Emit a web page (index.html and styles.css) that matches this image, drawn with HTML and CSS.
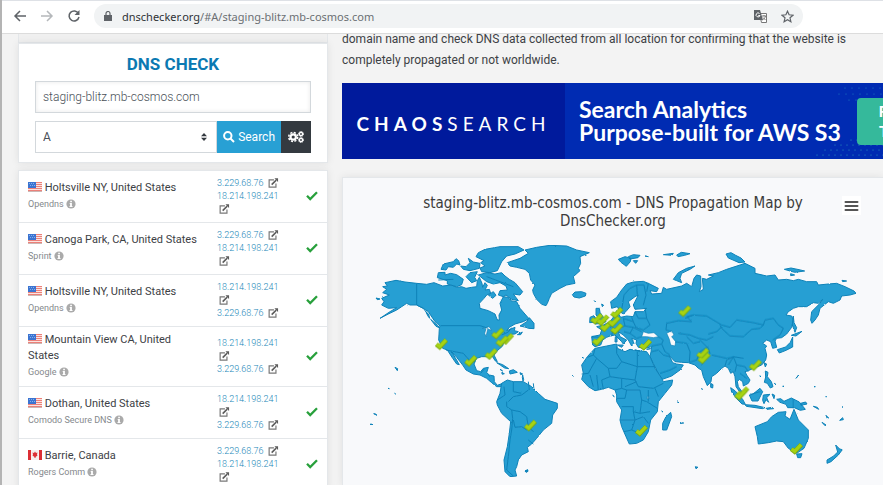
FILE: index.html
```html
<!DOCTYPE html>
<html lang="en">
<head>
<meta charset="utf-8">
<title>DNS Checker</title>
<link rel="stylesheet" href="styles.css">
</head>
<body>
<svg class="defs" aria-hidden="true">
  <symbol id="flag-us" viewBox="0 0 14 10"><path fill="#fbe3df" d="M0 0h14v10H0z"/><path stroke="#ec8079" d="M0 .5h14M0 2.5h14M0 4.5h14M0 6.5h14M0 8.5h14"/><path fill="#3b74d1" d="M0 0h8v6H0z"/><path stroke="#84aeea" stroke-dasharray="1 1" d="M1 1.5h6M2 3.5h6"/><path fill="none" stroke="#00000030" d="M0 9.5h14"/></symbol>
  <symbol id="flag-ca" viewBox="0 0 14 10"><path fill="#f7eeee" d="M0 0h14v10H0z"/><path fill="#dc2f35" d="M0 0h3v10H0zM11 0h3v10h-3zM7 1.500l1 1.500 1.500-.5-.5 2 .5 1L7.500 7v1h-1V7L4.500 5.500l.5-1-.5-2L6 3z"/></symbol>
  <symbol id="info" viewBox="0 0 10 10"><circle cx="5" cy="5" r="4.600" fill="#aaa"/><path fill="#fff" d="M4.200 1.800h1.700v1.500H4.200zM3.700 4h2.200v3h.6v1h-3V7h.6V5h-.4z"/></symbol>
  <symbol id="ext" viewBox="0 0 12 11"><path fill="none" stroke="#787878" stroke-width="1.300" d="M6.500 2H1.200v8h7.500V6"/><path stroke="#5c5c5c" stroke-width="1.700" d="M4 7.300l5-5"/><path fill="#5c5c5c" d="M7 .3h4v4z"/></symbol>
  <symbol id="ok" viewBox="0 0 12 10"><path fill="none" stroke="#28a03c" stroke-width="2.300" d="M1 4.800l3.200 3.200L11 1.200"/></symbol>
  <symbol id="pin" viewBox="-22 -20 44 40"><path fill="none" stroke="#7da90f" stroke-width="14" d="M-15 1L-5 9 15-12"/><path fill="none" stroke="#a6d313" stroke-width="10" d="M-14 1L-5 8 14-12"/></symbol>
</svg>

<header class="toolbar">
  <button class="nav" aria-label="Back"><svg viewBox="0 0 14 14"><path d="M13 7H2M7 2L2 7l5 5"/></svg></button>
  <button class="nav nav-off" aria-label="Forward"><svg viewBox="0 0 14 14"><path d="M1 7h11M7 2l5 5-5 5"/></svg></button>
  <button class="nav" aria-label="Reload"><svg viewBox="0 0 14 14"><path d="M11.500 4.500A5 5 0 1 0 12 8"/><path class="solid" d="M12.500 1v5h-5z"/></svg></button>
  <div class="address">
    <svg class="lock" viewBox="0 0 8 10"><path fill="#5f6368" d="M0 4h8v6H0z"/><path fill="none" stroke="#5f6368" stroke-width="1.200" d="M2 4V2.500a2 2 0 0 1 4 0V4"/></svg>
    <span class="url"><b>dnschecker.org</b>/#A/staging-blitz.mb-cosmos.com</span>
    <button class="tool" aria-label="Translate"><svg viewBox="0 0 13 13"><path fill="#fff" stroke="#777" d="M5.500 3.500h7v9h-5z"/><path fill="#5f6368" d="M0 0h6l3 10H0z"/><path fill="none" stroke="#fff" d="M5.500 3.500A2 2 0 1 0 6 5.500H4.300"/><path fill="none" stroke="#777" d="M8 6h4M10 5v1M11.500 6c-.5 2-1.500 3-3 4M9 7.500l2.500 2.500"/></svg></button>
    <button class="tool" aria-label="Bookmark"><svg viewBox="0 0 13 13"><path fill="none" stroke="#5f6368" stroke-width="1.200" d="M6.500 1.200l1.600 3.600 3.900.4-3 2.600.9 3.900-3.400-2-3.400 2 .9-3.900-3-2.600 3.900-.4z"/></svg></button>
  </div>
</header>

<main class="page">
  <aside class="side">
    <div class="card-end"></div>
    <form class="card search">
      <h1>DNS CHECK</h1>
      <input class="field" type="text" aria-label="Domain name" value="staging-blitz.mb-cosmos.com">
      <div class="controls">
        <span class="picker"><select aria-label="Record type"><option>A</option></select><svg viewBox="0 0 6 8"><path fill="#343a40" d="M0 3.300L3 0l3 3.300zM0 4.700h6L3 8z"/></svg></span>
        <button class="go" type="button"><svg viewBox="0 0 12 12"><circle cx="4.800" cy="4.800" r="3.700"/><path d="M7.500 7.500L11 11"/></svg>Search</button>
        <button class="gear" type="button" aria-label="Settings"><svg viewBox="0 0 16 12"><g fill="none" stroke="#fff"><circle cx="5.200" cy="6" r="2.700" stroke-width="2.200"/><circle cx="5.200" cy="6" r="4.500" stroke-width="1.500" stroke-dasharray="2.100 1.434"/><circle cx="13" cy="3" r="1.600" stroke-width="1.400"/><circle cx="13" cy="3" r="2.500" stroke-dasharray="1.200 .764"/><circle cx="13" cy="9" r="1.600" stroke-width="1.400"/><circle cx="13" cy="9" r="2.500" stroke-dasharray="1.200 .764"/></g></svg></button>
      </div>
    </form>
    <table class="card results">
      <tr><td class="place"><svg class="flag"><use href="#flag-us"/></svg> Holtsville NY, United States<small>Opendns <svg class="info"><use href="#info"/></svg></small></td><td class="ips"><a href="#">3.229.68.76</a> <svg><use href="#ext"/></svg> <a href="#">18.214.198.241</a> <svg><use href="#ext"/></svg></td><td class="state"><svg><use href="#ok"/></svg></td></tr>
      <tr><td class="place"><svg class="flag"><use href="#flag-us"/></svg> Canoga Park, CA, United States<small>Sprint <svg class="info"><use href="#info"/></svg></small></td><td class="ips"><a href="#">3.229.68.76</a> <svg><use href="#ext"/></svg> <a href="#">18.214.198.241</a> <svg><use href="#ext"/></svg></td><td class="state"><svg><use href="#ok"/></svg></td></tr>
      <tr><td class="place"><svg class="flag"><use href="#flag-us"/></svg> Holtsville NY, United States<small>Opendns <svg class="info"><use href="#info"/></svg></small></td><td class="ips"><a href="#">18.214.198.241</a> <svg><use href="#ext"/></svg><br><a href="#">3.229.68.76</a> <svg><use href="#ext"/></svg></td><td class="state"><svg><use href="#ok"/></svg></td></tr>
      <tr><td class="place"><svg class="flag"><use href="#flag-us"/></svg> Mountain View CA, United States<small>Google <svg class="info"><use href="#info"/></svg></small></td><td class="ips"><a href="#">18.214.198.241</a> <svg><use href="#ext"/></svg><br><a href="#">3.229.68.76</a> <svg><use href="#ext"/></svg></td><td class="state"><svg><use href="#ok"/></svg></td></tr>
      <tr><td class="place"><svg class="flag"><use href="#flag-us"/></svg> Dothan, United States<small>Comodo Secure DNS <svg class="info"><use href="#info"/></svg></small></td><td class="ips"><a href="#">18.214.198.241</a> <svg><use href="#ext"/></svg><br><a href="#">3.229.68.76</a> <svg><use href="#ext"/></svg></td><td class="state"><svg><use href="#ok"/></svg></td></tr>
      <tr><td class="place"><svg class="flag"><use href="#flag-ca"/></svg> Barrie, Canada<small>Rogers Comm <svg class="info"><use href="#info"/></svg></small></td><td class="ips"><a href="#">3.229.68.76</a> <svg><use href="#ext"/></svg> <a href="#">18.214.198.241</a> <svg><use href="#ext"/></svg></td><td class="state"><svg><use href="#ok"/></svg></td></tr>
    </table>
  </aside>

  <section class="content">
    <p class="intro">domain name and check DNS data collected from all location for confirming that the website is completely propagated or not worldwide.</p>
    <div class="banner">
      <div class="brand"><b>CHAOS</b>SEARCH</div>
      <div class="pitch">Search Analytics<br>Purpose-built for AWS S3</div>
      <svg class="dots" viewBox="0 0 100 76"><g fill="none" stroke="#1e7fc0" stroke-width="1.200" stroke-linecap="round"><path stroke-dasharray="0 7" d="M62 5h40M56 11h44M66 17h10"/><path stroke-dasharray="0 6" stroke="#2b9bbd" d="M52 62h50M42 67h60M34 72h70M68 57h30"/></g></svg>
      <button class="cta" type="button">Free<br>Trial</button>
    </div>
    <div class="card map">
      <div class="map-head">
        <h2>staging-blitz.mb-cosmos.com - DNS Propagation Map by DnsChecker.org</h2>
        <button class="menu" type="button" aria-label="Chart menu"><svg viewBox="0 0 14 12"><path stroke="#555" stroke-width="2" stroke-linecap="round" d="M1 2h12M1 6h12M1 10h12"/></svg></button>
      </div>
      <svg class="world" viewBox="0 0 1620 735" role="img" aria-label="World map of DNS propagation">
        <filter id="coast" x="0" y="0" width="1" height="1"><feTurbulence type="fractalNoise" baseFrequency=".12" numOctaves="2" seed="4"/><feDisplacementMap in="SourceGraphic" scale="5" xChannelSelector="R" yChannelSelector="G"/></filter>
        <g class="land" filter="url(#coast)">
          <g transform="translate(51 0)">
            <path d="M68 140L82 138 75 128 108 121 135 126 170 130 200 133 222 128 248 138 275 135 290 142 305 140 318 145 335 142 350 140 352 122 358 112 366 130 368 142 375 128 382 136 375 150 388 148 392 160 380 165 372 175 358 190 360 205 385 212 405 222 412 240 418 240 417 225 425 210 420 190 430 170 445 172 452 182 470 185 480 205 500 228 507 236 490 245 465 252 448 262 440 272 450 268 465 262 463 272 475 275 465 282 452 283 440 292 432 302 428 318 412 332 402 345 412 365 405 362 398 350 385 350 365 350 350 355 342 372 350 392 362 395 370 385 385 382 380 398 388 405 402 408 403 425 412 436 428 430 425 440 410 440 395 428 380 415 360 405 340 402 318 390 308 375 290 352 275 335 285 352 298 374 290 372 278 355 262 330 248 325 236 300 238 265 240 258 225 245 205 215 190 205 170 195 150 195 140 190 125 200 110 210 85 222 60 235 90 215 110 203 85 205 65 195 72 185 65 175 88 165 68 158 80 148Z"/>
            <path d="M232 113L235 98 255 97 255 105 272 100 290 104 310 118 305 134 290 140 262 132 262 122zM243 88L250 72 280 65 288 56 296 62 300 75 290 72 280 82 265 80 258 90zM302 78L318 80 330 68 325 55 340 66 360 70 358 85 330 92 310 88zM318 110L330 98 352 95 344 112 350 122 335 128zM348 50L355 38 375 28 420 20 475 20 492 30 465 42 440 48 425 65 412 92 390 98 365 95 360 84 375 78 362 68 372 62zM355 105L380 98 405 102 425 98 435 108 448 118 465 128 488 155 480 165 460 162 475 182 455 178 438 165 430 170 415 165 420 152 442 150 438 138 420 128 400 132 380 125zM385 165L400 155 408 166 398 175zM508 233L522 250 522 266 505 265 498 262 480 258 500 245z"/>
            <path d="M472 284l15-8-5 8zM410 368l18 6 18 12-12-2-12-8zM448 393l12-4 12 8-22 5zM425 398l8 3-6 2zM480 398l8 4-6 2zM488 405l3 14-2 5-2-12zM420 388l8 5zM105 382l8 4-1 6zM84 445l4 1zM104 460l3 2zM41 521l6 1 4 4zM30 553l6 0zM495 693l8-4 1 5-6 3zM48 174l12 3-8 2zM198 215l8 8 3 12-6-8zM212 238l20 18 8 8-12-5z"/>
          </g>
          <g transform="translate(471 0)">
            <path d="M22 68L60 55 85 40 75 30 110 22 150 16 200 18 230 30 268 38 240 50 242 70 235 85 240 92 220 110 225 130 200 135 180 145 155 160 148 175 142 190 138 197 125 193 110 178 100 160 98 150 105 135 92 120 88 100 75 88 50 82 30 78Z"/>
            <path d="M5 430L22 420 40 425 70 425 95 440 115 460 135 478 172 490 172 505 158 525 155 550 130 570 110 595 95 612 82 622 85 635 65 645 55 660 50 680 45 690 50 708 30 710 15 695 12 660 22 620 28 580 32 545 5 520-8 495-10 485 0 460Z"/>
            <path d="M335 205L332 185 350 172 365 150 380 132 400 126 430 124 445 130 475 145 470 155 450 152 455 162 485 160 490 142 500 148 545 138 560 130 575 140 582 115 590 105 602 108 603 140 598 155 610 148 607 115 620 118 640 108 625 105 655 98 680 88 720 75 735 70 765 85 765 100 800 108 825 105 835 120 860 118 880 122 895 118 920 125 950 125 955 135 985 132 1010 130 1035 140 1062 153 1068 160 1050 165 1025 168 1020 180 1000 190 985 185 960 205 955 225 945 240 936 250 932 240 935 215 960 190 968 178 955 190 940 188 920 200 895 200 880 205 865 215 858 225 875 228 880 240 875 262 860 282 845 293 830 295 825 303 830 322 818 325 812 305 800 300 788 310 800 318 795 325 800 345 797 360 785 375 760 385 745 392 735 395 740 405 750 420 745 430 730 438 728 425 718 418 712 425 715 440 728 458 722 460 708 440 705 410 700 395 692 400 685 385 675 378 665 385 650 400 635 410 633 425 622 437 610 410 605 390 595 385 585 375 565 368 545 367 525 365 508 347 518 368 530 372 550 375 540 390 515 408 487 418 475 400 460 370 450 350 453 335 455 320 435 325 415 322 408 310 410 300 395 295 402 310 395 318 385 300 370 285 355 275 360 290 380 300 370 312 365 305 345 285 330 288 320 292 308 300 302 315 285 320 278 315 275 290 300 285 305 270 290 260 310 255 330 245 345 225 350 212 362 232 380 228 400 230 405 215 430 215 440 205 405 208 400 195 415 165 405 170 385 185 390 200 380 212 370 222 360 215 352 200Z"/>
            <path d="M285 325L320 318 350 312 352 325 375 335 390 328 410 332 440 335 450 350 465 385 485 415 490 425 518 420 515 435 495 460 475 485 472 515 452 540 445 575 430 600 410 610 388 612 378 590 365 560 360 540 365 510 350 485 350 465 345 450 325 442 305 448 285 452 265 440 245 418 250 400 245 375 262 350ZM512 517L515 530 500 570 488 570 488 550 498 530Z"/>
            <path d="M217 164L225 156 245 155 258 160 256 168 238 174 222 171zM288 205l10 0 2 12 12 18 6 10-12 5-20 2 10-8-8-6 8-5-8-8zM270 232l12-5 5 8-4 12-14 1zM355 58l20-8 18 5-2 10-12 14-16-12zM385 50l15-6 20 2-6 7-24 4zM400 62l13 0-6 8zM435 48l10 2zM490 44l30-4-4 6zM530 45l14-8 26 4-16 5-20 4zM520 118L535 98 560 85 585 78 570 88 545 100 540 115 545 128 530 122zM283 182l4 4zM305 192l6 4-4 4zM346 290l5 0 0 16-6 0zM352 315l18 0-5 7zM405 330l15 3zM440 328l12-2zM217 406l3 3zM246 352l5 2zM338 466l5 4zM348 477l3 3zM532 486l5 2zM541 548l4 2zM485 513l4 3zM75 693l8-3-3 6zM546 549h5zM586 680l8 2-7 3z"/>
          </g>
          <g transform="translate(1011 0)">
            <path d="M225 560L262 545 275 530 295 517 318 515 315 528 330 538 342 508 355 540 385 570 385 595 372 625 350 640 325 625 310 605 290 603 265 608 235 612 232 590ZM350 642l16-1-4 12-9 0zM467 615l12 12 8 2-12 16-22 20-12 5 0-10 20-12 12-12z"/>
            <path d="M152 443l14 10 22 25 8 15-10-1-16-16-15-20zM195 494l30 2 30 7-8 3-48-7zM258 505l18-3 5 4-20 2zM208 465l10-2 22-18 8 10-6 12-8 16-18 0zM250 465l20-2-10 10 6 14-8-8-6 12-4-10zM256 393l8 4-2 13 12 15 5 15-8 4-9-14-9-3 4-16zM276 462l8 4-2 10zM290 478l12-2 10 8 22-10 24 12 18 22-15 3-18-8-20 0-5-10-18-6zM362 490l15-4 4 6-18 4zM400 499l12 3 4 6zM438 526l8 8-4 2zM426 547l12 8-3 2zM479 541l9-8 2 6zM92 430l7 4-1 10-6-2zM252 368l8 4-4 9zM340 228l2 20 8 15-5 14-8-22zM344 282l22-8-18 14-14-2zM338 291l0 30-20 10-20 8-6-10 25-8 14-14zM138 42l15-4 14 8 16 8 12 12-18 2-18-8-14-6zM313 88l20-4 24 5 17 4-30 4zM332 101l12 4-12 2zM486 121l14 2-12 2zM348 415l8-10zM308 439h4zM402 440h4zM437 470h3zM486 501h3zM64 446l4 2zM0 549l4 1zM283 430l5 4zM240 407l2 4z"/>
          </g>
        </g>
        <g class="sea">
          <path transform="translate(471 0)" d="M425 290L430 275 445 280 462 278 475 290 460 293 440 290ZM500 280L515 272 522 285 515 290 527 305 525 318 512 315 508 298ZM442 469l6 0-1 8-5 0z"/>
          <path transform="translate(51 0)" d="M367 265l20-5 8 10-12-2-5 22-4-10 4-14zM395 280l16 4-8 4z"/>
        </g>
        <g class="borders" filter="url(#coast)">
          <path transform="translate(51 0)" d="M170 130V195L190 205 205 225M242 257H360L385 265M425 285L445 276 455 263M258 330L310 340 332 365 345 365M362 400L372 388M385 405L390 410M460 425V455L485 460M432 440L435 465 412 480M440 485L440 500 455 510 458 535 455 570 450 600 445 650 440 690 460 708M455 510L480 515 500 530 505 560 520 575M460 540L465 562 485 560 500 570M445 485L460 470 485 465 505 450M505 425L508 450M520 430L522 450M505 600L520 612M235 120L280 118M380 110L420 125 460 140"/>
          <path transform="translate(471 0)" d="M365 210L372 165 390 145 410 135 432 135M410 135L412 165M432 135L438 165 430 195M445 130L440 155M405 215L415 235 440 235 450 255 430 270 408 262 400 245 370 235M350 230L345 252 330 262M370 235L375 258 350 265M375 258L400 262 390 280 372 275M400 262L425 275M390 280L410 295 425 290M395 232L400 245M440 235L435 205M330 245L325 250 340 262 335 288M275 290L300 292 305 300M475 290L490 300 485 312 455 318M485 312L495 335 510 345M455 335L475 330 490 345 510 350M480 400L510 390 530 380M500 250L535 242 575 245 560 230 580 225 620 228 640 240 665 255 690 262 710 240 760 248 790 255 780 265 755 268 730 290 690 288 665 265 660 255M500 250L498 270 515 275M525 305L560 310 570 335 568 367M580 225L555 235M535 280L570 285 595 295 620 300 640 290M560 290L580 310 600 305M625 282L650 275 665 260M790 255L795 240 820 235 835 255 850 265 840 285 818 300M568 367L590 360 600 335 625 320M605 375L630 340 625 325 600 300M635 345L680 355 700 352M675 378L680 360 700 350 710 375 705 395M710 375L735 380 745 395M720 400L740 415"/>
          <path transform="translate(471 0)" d="M285 325L280 345 262 352M280 345L290 355 265 400 245 402M290 355L325 385 350 385 365 365 350 340 350 320M412 335V380H465M365 365L412 380 405 420 415 440 460 445 490 430M325 385L330 410 305 420 310 448M330 410L365 415 405 420M365 415L365 445 345 450M375 440L410 425M365 445L380 450 375 475 350 475M380 450L420 450 425 480 420 520 400 515 400 500 365 500M290 405L295 450M270 405L280 440M425 480L440 485 472 505M445 450L445 485M400 515L405 540 362 540M405 540L395 570 372 575M405 540L430 530 445 550M395 570L420 580 440 560M465 445L475 470M420 520L450 515"/>
          <path transform="translate(1011 0)" d="M340 478L340 505M212 463L240 455M190 355L160 350 145 375"/>
        </g>
        <g class="pins">
          <use href="#pin" x="273" y="292" width="44" height="40"/><use href="#pin" x="442" y="260" width="44" height="40"/><use href="#pin" x="361" y="342" width="44" height="40"/><use href="#pin" x="422" y="321" width="44" height="40"/><use href="#pin" x="471" y="276" width="44" height="40"/><use href="#pin" x="455" y="283" width="44" height="40"/><use href="#pin" x="540" y="536" width="44" height="40"/>
          <use href="#pin" x="739" y="216" width="44" height="40"/><use href="#pin" x="757" y="220" width="44" height="40"/><use href="#pin" x="767" y="238" width="44" height="40"/><use href="#pin" x="791" y="224" width="44" height="40"/><use href="#pin" x="799" y="198" width="44" height="40"/><use href="#pin" x="799" y="246" width="44" height="40"/><use href="#pin" x="744" y="280" width="44" height="40"/><use href="#pin" x="885" y="294" width="44" height="40"/><use href="#pin" x="1003" y="193" width="44" height="40"/><use href="#pin" x="873" y="552" width="44" height="40"/>
          <use href="#pin" x="1057" y="320" width="44" height="40"/><use href="#pin" x="1061" y="334" width="44" height="40"/><use href="#pin" x="1215" y="355" width="44" height="40"/><use href="#pin" x="1177" y="436" width="44" height="40"/><use href="#pin" x="1171" y="443" width="44" height="40"/><use href="#pin" x="1338" y="606" width="44" height="40"/>
        </g>
      </svg>
    </div>
  </section>
</main>
</body>
</html>
```
FILE: styles.css
```css
* { box-sizing: border-box; }
body {
  margin: 0;
  height: 100vh;
  display: flex;
  flex-direction: column;
  overflow: hidden;
  border-left: 2px solid #b4b4b4;
  background: #f3f3f3;
  color: #3d4145;
  font-family: Roboto, "Liberation Sans", sans-serif;
  font-size: 12px;
}
button { border: 0; padding: 0; background: none; font: inherit; }
svg { display: inline-block; }
.defs { position: absolute; width: 0; height: 0; }

.toolbar {
  flex: none;
  height: 34px;
  display: flex;
  align-items: center;
  gap: 13px;
  padding: 0 80px 2px 11px;
  background: #fff;
  border-top: 1px solid #dee1e6;
  border-bottom: 1px solid #dcdcdc;
}
.nav { width: 14px; height: 14px; }
.nav svg { display: block; fill: none; stroke: #5f6368; stroke-width: 1.500; }
.nav .solid { fill: #5f6368; stroke: none; }
.nav-off svg { stroke: #b5b8bb; }
.address {
  flex: 1;
  height: 24px;
  display: flex;
  align-items: center;
  gap: 14px;
  padding: 0 9px 0 10px;
  border-radius: 12px;
  background: #f1f3f4;
}
.lock { width: 8px; height: 10px; margin-right: -4px; }
.url { flex: 1; color: #6b6f73; font: 11px "Noto Sans", "Open Sans", sans-serif; }
.url b { color: #2f3236; font-weight: 400; }
.tool { width: 13px; height: 13px; }
.tool svg { display: block; }

.page {
  flex: 1;
  min-height: 0;
  overflow: hidden;
  display: grid;
  grid-template-columns: 310px 1fr;
  gap: 14px;
  padding-left: 16px;
}
.card {
  background: #fff;
  border: 1px solid #e4e7ea;
  box-shadow: 0 0 8px #00000014;
}
.card-end { height: 9px; border: 1px solid #e4e7ea; border-top: 0; background: #f0f0f0; }
.search { padding: 9px 16px; }
h1 {
  margin: 0 0 6px;
  color: #0b79b2;
  font-size: 17px;
  line-height: 22px;
  font-weight: 700;
  text-align: center;
}
.field {
  display: block;
  width: 100%;
  height: 32px;
  padding: 0 7px;
  border: 1px solid #d3d8dc;
  box-shadow: inset 0 0 4px #00000018;
  color: #495057;
  font: 300 12px Roboto, sans-serif;
}
.controls { display: flex; height: 32px; margin-top: 8px; }
.picker { flex: 1; position: relative; }
.picker select {
  width: 100%;
  height: 100%;
  appearance: none;
  padding: 0 7px;
  border: 1px solid #d3d8dc;
  border-radius: 0;
  background: #fff;
  color: #495057;
  font: 12px Roboto, sans-serif;
}
.picker svg { position: absolute; right: 10px; top: 12px; width: 6px; height: 8px; }
.go {
  display: flex;
  align-items: center;
  gap: 3px;
  padding: 0 6px;
  background: #28a0d4;
  color: #fff;
}
.go svg { width: 12px; height: 12px; fill: none; stroke: #fff; stroke-width: 2; }
.gear { width: 30px; background: #343a40; }
.gear svg { width: 16px; height: 12px; display: block; margin: 0 auto; }

.results {
  width: 100%;
  margin-top: 7px;
  border-spacing: 0;
  table-layout: fixed;
}
td { height: 52px; padding: 5px 0; border-bottom: 1px solid #e4e7ea; vertical-align: middle; }
.place { width: 189px; padding-left: 9px; padding-right: 9px; font-size: 11px; line-height: 16px; }
.place small { display: block; color: #85898d; font-size: 9px; line-height: 17px; }
.flag { width: 14px; height: 10px; vertical-align: -1px; }
.info { width: 10px; height: 10px; vertical-align: -2px; }
.ips { width: 77px; padding-left: 9px; font-size: 9px; font-weight: 300; line-height: 13px; }
.ips a { color: #2387b8; text-decoration: none; }
.ips svg { width: 11px; height: 10px; margin-left: 2px; vertical-align: -2px; }
.state { text-align: right; padding-right: 9px; }
.state svg { width: 12px; height: 10px; }

.intro { margin: -5px 0 0; padding: 0 30px 12px 0; line-height: 21px; }
.banner {
  position: relative;
  display: flex;
  align-items: center;
  height: 76px;
  overflow: hidden;
  background: #002bb2;
  color: #fff;
}
.brand {
  flex: none;
  width: 223px;
  height: 100%;
  display: flex;
  align-items: center;
  justify-content: center;
  padding-top: 4px;
  background: #001a9c;
  font: 400 19px Lato, sans-serif;
  letter-spacing: 5px;
}
.brand b { font-weight: 700; }
.pitch { flex: 1; padding-left: 14px; font: 700 23px/23px Lato, sans-serif; white-space: nowrap; }
.dots { position: absolute; right: 0; top: 0; width: 100px; height: 76px; }
.cta {
  position: relative;
  flex: none;
  width: 74px;
  height: 47px;
  margin-right: -48px;
  border-radius: 4px;
  background: #35b99b;
  color: #fff;
  font: 700 16px/20px Lato, sans-serif;
}
.map { margin-top: 18px; background: #f8f9fb; border-right: 0; }
.map-head { position: relative; padding: 16px 80px 10px; }
h2 {
  margin: 0;
  color: #3c3c3c;
  font: 400 15px/18px "DejaVu Sans Condensed", "DejaVu Sans", sans-serif;
  text-align: center;
}
.menu { position: absolute; right: 22px; top: 18px; width: 19px; height: 19px; background: #fff; }
.menu svg { display: block; width: 15px; height: 12px; margin: 0 auto; }
.world { display: block; width: 100%; }
.land { fill: #279fd3; stroke: #0f82b8; stroke-width: 3; stroke-linejoin: round; }
.sea { fill: #f8f9fb; stroke: #0f82b8; stroke-width: 2; }
.borders { fill: none; stroke: #0f82b8; stroke-width: 3; stroke-linejoin: round; }
```
